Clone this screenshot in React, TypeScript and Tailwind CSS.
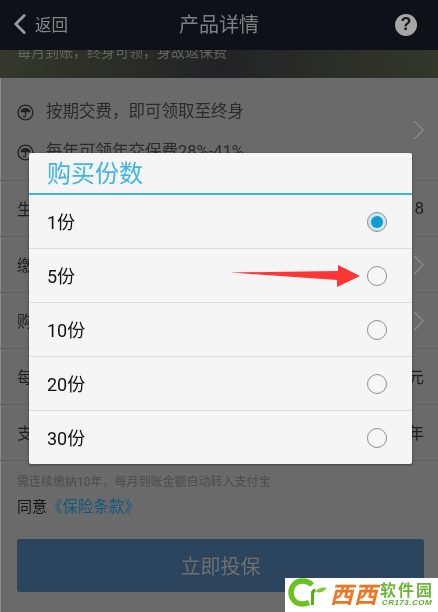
import { ChevronLeft, ChevronRight } from "lucide-react";

const cjk = "font-['Roboto','Noto_Sans_CJK_SC',sans-serif]";

const rows = [
  { label: "生日", right: "1978", digits: true },
  { label: "缴费年限", arrow: true },
  { label: "购买份数", arrow: true },
  { label: "每月保费", right: "100元" },
  { label: "支付年限", right: "10年" },
];

const options = ["1份", "5份", "10份", "20份", "30份"];

function UmbrellaIcon() {
  return (
    <svg width="17" height="17" viewBox="0 0 17 17" fill="none" className="shrink-0">
      <circle cx="8.5" cy="8.5" r="7.4" stroke="#232323" strokeWidth="1.3" />
      <path d="M3.4 8.2C4 5.4 6 4 8.5 4s4.500 1.400 5.100 4.200z" fill="#232323" />
      <path d="M8.500 8v3.800c0 1.500-2 1.500-2.200.3" stroke="#232323" strokeWidth="1.200" />
    </svg>
  );
}

function Radio({ checked }: { checked: boolean }) {
  return (
    <div
      className={`w-[20px] h-[20px] rounded-full border border-[#8e8e8e] flex items-center justify-center ${
        checked ? "bg-[#cde6f1]" : "bg-[#f6f6f6]"
      }`}
    >
      {checked && <div className="w-[12px] h-[12px] rounded-full bg-[#0f9bd2]" />}
    </div>
  );
}

function Logo() {
  return (
    <div className="absolute right-0 bottom-0 w-[153px] h-[34px] bg-white flex items-center overflow-hidden">
      <svg width="46" height="34" viewBox="0 0 46 34" className="shrink-0">
        <path d="M27 7C24 3.500 20.500 3 17 3 10.500 3 6 8.500 6 14.500S10.500 26 17 26c3 0 5-.5 7-1.500" fill="none" stroke="#6cc01f" strokeWidth="5.500" />
        <path d="M26 27V15c0-2.500 1.500-4 4.500-4.500v3.500c-1 .3-1.500 1-1.500 2v11z" fill="#58ad18" />
        <path d="M31 14c1-3.500 5-5 10.500-4.500C40 13 36.500 15.500 31 14z" fill="#7ccc2a" />
      </svg>
      <div className="flex items-center gap-[2px] -ml-[1px]">
        <span className={`${cjk} text-[23px] leading-none font-bold italic text-[#ee7420] tracking-[1px]`}>西西</span>
        <div className="flex flex-col items-center">
          <span className={`${cjk} text-[16px] leading-[16px] font-bold text-[#6db53a] tracking-[2px]`}>软件园</span>
          <span className="font-['Liberation_Sans',sans-serif] text-[8px] leading-[8px] font-bold italic text-[#5cae2a] tracking-[0.5px]">CR173.COM</span>
        </div>
      </div>
    </div>
  );
}

export default function App() {
  return (
    <div className={`${cjk} relative w-[438px] h-[612px] overflow-hidden bg-[#6a6a6a] shadow-[inset_1px_0_0_#8c8c8c] blur-[0.4px]`}>
      <header className="relative z-10 h-[50px] bg-[#0e1218] grid grid-cols-[1fr_auto_1fr] items-center px-[21px]">
        <div className="flex items-center -ml-[18px] text-[#868686] text-[16.500px]">
          <ChevronLeft size={34} strokeWidth={2} className="-mt-[3px] text-[#9a9a9a]" />
          <span className="-ml-[2px] mt-[2px]">返回</span>
        </div>
        <h1 className="text-[20px] font-normal text-[#7f7f7f]">产品详情</h1>
        <div className="flex justify-end">
          <div className="w-[22px] h-[22px] -mt-[1px] rounded-full bg-[#a6a6a6] flex items-center justify-center text-[#1a1a1a] text-[18px] font-bold font-['Liberation_Sans',sans-serif]">
            ?
          </div>
        </div>
      </header>

      <section className="h-[28px] overflow-hidden px-[17px] bg-gradient-to-r from-[#35382a] via-[#232326] to-[#34372a]">
        <p className="-mt-[8px] text-[14px] leading-[20px] text-[#65655e]">每月到账，终身可领，身故返保费</p>
      </section>

      <section className="relative h-[103px] border-b border-[#5f5f5f] px-[17px] pt-[22px] text-[16.500px] leading-[24px] text-[#2b2b2b]">
        <div className="flex items-center gap-[12px] h-[24px]">
          <UmbrellaIcon />
          <span>按期交费，即可领取至终身</span>
        </div>
        <div className="flex items-center gap-[12px] h-[24px] mt-[16px]">
          <UmbrellaIcon />
          <span>每年可领年交保费28%-41%</span>
        </div>
        <ChevronRight size={34} strokeWidth={1} className="absolute right-[2px] top-[35px] text-[#8a8a8a]" />
      </section>

      {rows.map((row) => (
        <div
          key={row.label}
          className="h-[56px] border-b border-[#5f5f5f] pl-[17px] pr-[14px] pt-[3px] flex items-center justify-between text-[16px] text-[#1f1f1f]"
        >
          <span>{row.label}</span>
          {row.arrow ? (
            <ChevronRight size={34} strokeWidth={1} className="-mt-[3px] -mr-[12px] text-[#8a8a8a]" />
          ) : (
            <span className={row.digits ? "text-[17px] tracking-[3px] -mr-[3px] -mt-[3px]" : ""}>{row.right}</span>
          )}
        </div>
      ))}

      <p className="mt-[13px] pl-[17px] text-[12px] leading-[16px] text-[#4c4c4c]">
        需连续缴纳10年，每月到账金额自动转入支付宝
      </p>
      <p className="mt-[7px] pl-[17px] text-[15px] leading-[20px] text-[#141414]">
        同意<span className="text-[#12597f] text-[15.500px]">《保险条款》</span>
      </p>
      <button className="block mt-[22px] ml-[17px] w-[407px] h-[53px] rounded-[3px] bg-[#2b455e] pt-[2px] text-[20px] text-[#6f6f6f]">
        立即投保
      </button>

      <div className="absolute left-[29px] top-[153px] w-[383px] bg-[#f5f5f5] rounded-[2px] shadow-[0_1px_3px_rgba(0,0,0,0.4)]">
        <div className="h-[42px] border-b-2 border-[#3ab4e0] pl-[18px] pt-[2px] flex items-center text-[24px] text-[#3db5e2]">
          购买份数
        </div>
        {options.map((option, index) => (
          <div
            key={option}
            className="h-[54px] last:h-[53px] border-b last:border-b-0 border-[#dcdcdc] pl-[18px] pr-[25px] flex items-center justify-between text-[18px] leading-none text-[#111111]"
          >
            <span className="pt-[2px]">{option}</span>
            <Radio checked={index === 0} />
          </div>
        ))}
      </div>

      <svg width="132" height="24" viewBox="0 0 132 24" className="absolute left-[230px] top-[264px]">
        <polygon points="0,8.500 108,7 108,1 130,12 107,23 107,16" fill="#ff3434" />
      </svg>

      <Logo />
    </div>
  );
}
